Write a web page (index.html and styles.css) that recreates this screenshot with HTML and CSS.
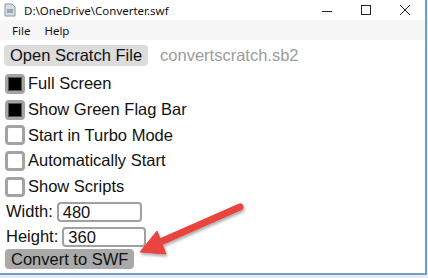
FILE: index.html
```html
<!DOCTYPE html>
<html lang="en">
<head>
  <meta charset="UTF-8" />
  <title>D:\OneDrive\Converter.swf</title>
  <link rel="stylesheet" href="styles.css">
</head>
<body>

  <div class="window">
    <div class="titlebar">
      <svg class="app-icon" width="12" height="14" viewBox="0 0 12 14">
        <path d="M1 1h7l3 3v9H1z" fill="#d6dde2" stroke="#8a97a0" stroke-width="1"/>
        <rect x="3" y="6" width="6" height="4" fill="#9aa8b2"/>
      </svg>
      <span class="title">D:\OneDrive\Converter.swf</span>
      <div class="controls">
        <svg width="12" height="12" viewBox="0 0 12 12"><path d="M1 7.5h10" stroke="#222" stroke-width="1"/></svg>
        <svg width="12" height="12" viewBox="0 0 12 12"><rect x="1.5" y="1.5" width="9" height="9" fill="none" stroke="#222" stroke-width="1"/></svg>
        <svg width="12" height="12" viewBox="0 0 12 12"><path d="M1 1l10 10M11 1L1 11" stroke="#222" stroke-width="1"/></svg>
      </div>
    </div>

    <div class="menubar">
      <span>File</span>
      <span>Help</span>
    </div>

    <div class="content">
      <div class="file-row">
        <button class="btn">Open Scratch File</button>
        <span class="filename">convertscratch.sb2</span>
      </div>

      <label class="check"><span class="box checked"></span>Full Screen</label>
      <label class="check"><span class="box checked"></span>Show Green Flag Bar</label>
      <label class="check"><span class="box"></span>Start in Turbo Mode</label>
      <label class="check"><span class="box"></span>Automatically Start</label>
      <label class="check"><span class="box"></span>Show Scripts</label>

      <div class="field">Width: <span class="input w">480</span></div>
      <div class="field">Height: <span class="input h">360</span></div>

      <button class="btn dark">Convert to SWF</button>
    </div>

    <!-- annotation arrow drawn over the window -->
    <svg class="arrow" width="428" height="278" viewBox="0 0 428 278">
      <defs>
        <filter id="shadow" x="-20%" y="-20%" width="140%" height="140%">
          <feDropShadow dx="1" dy="2" stdDeviation="1.5" flood-color="#000" flood-opacity="0.35"/>
        </filter>
      </defs>
      <g filter="url(#shadow)" fill="#e8453f" stroke="#e8453f">
        <line x1="240" y1="207" x2="158" y2="243" stroke-width="7" stroke-linecap="round"/>
        <polygon points="140,252 157,231 166,254" stroke-width="1" stroke-linejoin="round"/>
      </g>
    </svg>
  </div>

</body>
</html>
```

FILE: styles.css
```css
body {
  margin: 0;
  width: 428px;
  height: 278px;
  overflow: hidden;
  background: #e9edf2;
  font-family: "Liberation Sans", Arial, sans-serif;
}

.window {
  position: relative;
  width: 425px;
  height: 273px;
  background: white;
  border-right: 2px solid #6f9fd0;
  border-bottom: 2px solid #6f9fd0;
}

.titlebar {
  display: flex;
  align-items: center;
  height: 20px;
  padding-left: 4px;
  font-family: "Noto Sans", sans-serif;
  font-size: 11.5px;
  color: #111;
}

.app-icon {
  margin-right: 8px;
}

.controls {
  display: flex;
  gap: 27px;
  margin-left: auto;
  margin-right: 14px;
}

.menubar {
  display: flex;
  gap: 14px;
  height: 20px;
  align-items: center;
  padding-left: 12px;
  background: #f7f7f7;
  font-family: "Noto Sans", sans-serif;
  font-size: 11.5px;
  color: #111;
}

.content {
  display: flex;
  flex-direction: column;
  align-items: flex-start;
  padding: 5px 0 0 4px;
  font-size: 16.5px;
  color: #111;
}

.file-row {
  display: flex;
  align-items: center;
  gap: 12px;
  margin-bottom: 5px;
}

.btn {
  font-family: inherit;
  font-size: 16.5px;
  color: #111;
  background: #dcdcdc;
  border: none;
  border-radius: 4px;
  height: 21px;
  padding: 0 6px;
  line-height: 21px;
}

.btn.dark {
  background: #a9a9a9;
  margin-left: 1px;
  height: 20px;
  line-height: 20px;
}

.filename {
  color: #9c9c9c;
}

.check {
  display: flex;
  align-items: center;
  height: 25.7px;
  gap: 3px;
  padding-left: 1px;
}

.box {
  width: 20px;
  height: 20px;
  box-sizing: border-box;
  border: 3px solid #a3a3a3;
  border-radius: 4px;
  background: white;
}

.box.checked {
  background: #000;
  box-shadow: inset 0 0 0 1px #555;
}

.field {
  display: flex;
  align-items: center;
  height: 25px;
  padding-left: 2px;
  gap: 4px;
}

.input {
  box-sizing: border-box;
  height: 20px;
  border: 2px solid #a0a0a0;
  border-radius: 4px;
  padding-left: 4px;
  line-height: 16px;
}

.input.w {
  width: 85px;
}

.input.h {
  width: 84px;
}

.arrow {
  position: absolute;
  left: 0;
  top: 0;
}
```
